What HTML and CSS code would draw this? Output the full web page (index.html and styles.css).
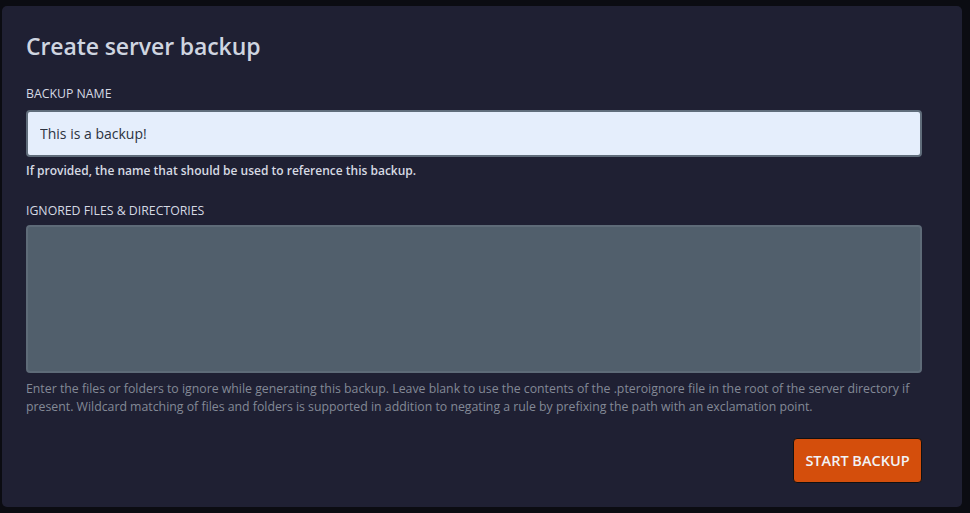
FILE: index.html
```html
<!DOCTYPE html>
<html>
<head>
<meta charset="utf-8">
<link rel="stylesheet" href="styles.css">
</head>
<body>
<div class="backdrop">
  <div class="modal">
    <h2 class="title">Create server backup</h2>
    <div class="field">
      <label class="label">BACKUP NAME</label>
      <input class="input" type="text" value="This is a backup!">
      <p class="help">If provided, the name that should be used to reference this backup.</p>
    </div>
    <div class="field field-ignored">
      <label class="label">IGNORED FILES &amp; DIRECTORIES</label>
      <textarea class="textarea"></textarea>
      <p class="help muted">Enter the files or folders to ignore while generating this backup. Leave blank to use the contents of the .pteroignore file in the root of the server directory if present. Wildcard matching of files and folders is supported in addition to negating a rule by prefixing the path with an exclamation point.</p>
    </div>
    <div class="actions">
      <button class="btn">START BACKUP</button>
    </div>
  </div>
</div>
</body>
</html>
```
FILE: styles.css
```css
* { box-sizing: border-box; }
html, body { margin: 0; padding: 0; height: 100%; }
body {
  background: #0b0c12;
  font-family: "Open Sans", "Noto Sans", sans-serif;
  overflow: hidden;
}
.backdrop {
  padding: 6px 8px 6px 2px;
}
.modal {
  width: 960px;
  height: 501px;
  background: #1f2033;
  border-radius: 5px;
  padding: 24px 40px 0 24px;
}
.title {
  margin: 0;
  font-size: 23px;
  font-weight: 600;
  color: #cfd5e0;
  line-height: 32px;
  letter-spacing: -0.1px;
}
.field { margin-top: 24px; }
.label {
  display: block;
  font-size: 12.3px;
  line-height: 16px;
  color: #d5d9e3;
  font-weight: 500;
  margin-bottom: 8px;
}
.input {
  display: block;
  width: 100%;
  height: 47px;
  background: #e5eefc;
  border: 2px solid #606d7b;
  border-radius: 4px;
  padding: 0 12px;
  font-family: inherit;
  font-size: 14px;
  color: #2c3340;
  outline: none;
}
.help {
  margin: 6px 0 0;
  font-size: 12px;
  line-height: 16px;
  color: #d6dae3;
  font-weight: 600;
}
.field-ignored { margin-top: 24px; }
.field-ignored .label { margin-bottom: 6px; }
.textarea {
  display: block;
  width: 100%;
  height: 148px;
  background: #515f6c;
  border: 2px solid #5e6b78;
  border-radius: 4px;
  resize: none;
  outline: none;
}
.help.muted {
  font-size: 12.3px;
  color: #838996;
  font-weight: 400;
  line-height: 18px;
  margin-top: 7px;
}
.actions {
  display: flex;
  justify-content: flex-end;
  margin-top: 22px;
}
.btn {
  width: 129px;
  height: 45px;
  background: #d44e0c;
  border: 1px solid #111;
  border-radius: 4px;
  color: #f1f3f7;
  font-family: inherit;
  font-weight: 600;
  font-size: 14.5px;
  letter-spacing: 0;
}
```
